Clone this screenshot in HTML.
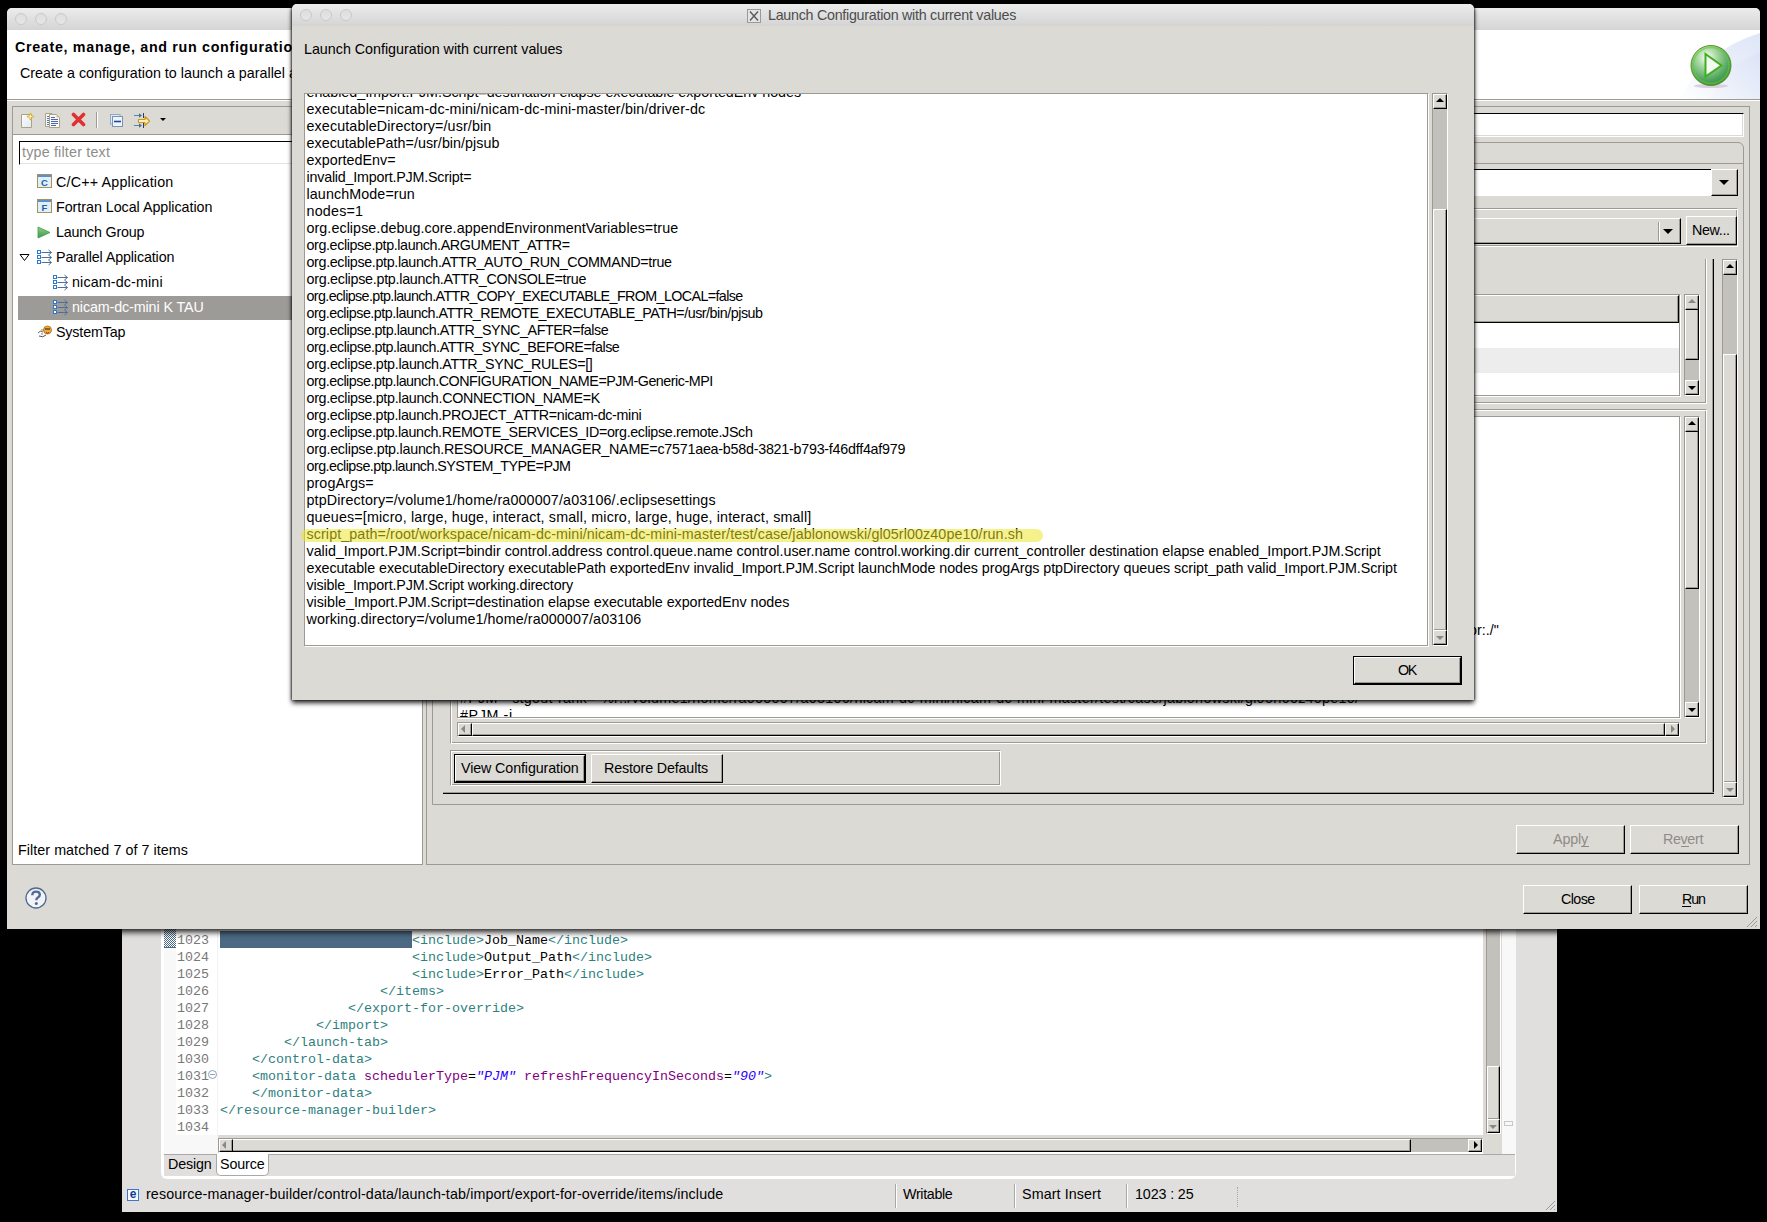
<!DOCTYPE html><html><head><meta charset="utf-8"><style>
html,body{margin:0;padding:0}
body{width:1767px;height:1222px;background:#000;position:relative;overflow:hidden;font-family:"Liberation Sans",sans-serif;font-size:14.3px;line-height:17px;color:#000}
.a{position:absolute;box-sizing:border-box}
.t{position:absolute;white-space:pre;line-height:17px;font-size:14.3px}
.m{position:absolute;white-space:pre;line-height:17px;font-family:"Liberation Mono",monospace;font-size:13.33px}
.tg{color:#2f7f7f}.an{color:#7f007f}.av{color:#2a00ff;font-style:italic}
</style></head><body>
<div class="a" style="left:122px;top:880px;width:1435px;height:332px;background:#e0dfde"></div><div class="a" style="left:161px;top:880px;width:1355px;height:299px;background:#fff;border-radius:0 0 6px 6px"></div><div class="a" style="left:164px;top:880px;width:12px;height:255px;background:#f8f8f8"></div><div class="a" style="left:164px;top:1135px;width:54px;height:20px;background:#f8f8f8"></div><div class="a" style="left:217px;top:880px;width:1px;height:255px;background:#f2f2f2"></div><div class="a" style="left:220px;top:931px;width:192px;height:17px;background:#4b6983"></div><div class="a" style="left:164px;top:929px;width:12px;height:19px;background-color:#fff;background-image:linear-gradient(45deg,#4b6983 25%,transparent 25%,transparent 75%,#4b6983 75%),linear-gradient(45deg,#4b6983 25%,transparent 25%,transparent 75%,#4b6983 75%);background-size:2px 2px;background-position:0 0,1px 1px;border-bottom:1px solid #4b6983"></div><div class="m" style="left:177px;top:932px;color:#787878">1023</div><div class="m" style="left:177px;top:949px;color:#787878">1024</div><div class="m" style="left:177px;top:966px;color:#787878">1025</div><div class="m" style="left:177px;top:983px;color:#787878">1026</div><div class="m" style="left:177px;top:1000px;color:#787878">1027</div><div class="m" style="left:177px;top:1017px;color:#787878">1028</div><div class="m" style="left:177px;top:1034px;color:#787878">1029</div><div class="m" style="left:177px;top:1051px;color:#787878">1030</div><div class="m" style="left:177px;top:1068px;color:#787878">1031</div><div class="m" style="left:177px;top:1085px;color:#787878">1032</div><div class="m" style="left:177px;top:1102px;color:#787878">1033</div><div class="m" style="left:177px;top:1119px;color:#787878">1034</div><div class="m" style="left:412px;top:932px;"><span class="tg">&lt;include&gt;</span>Job_Name<span class="tg">&lt;/include&gt;</span></div><div class="m" style="left:412px;top:949px;"><span class="tg">&lt;include&gt;</span>Output_Path<span class="tg">&lt;/include&gt;</span></div><div class="m" style="left:412px;top:966px;"><span class="tg">&lt;include&gt;</span>Error_Path<span class="tg">&lt;/include&gt;</span></div><div class="m" style="left:380px;top:983px;"><span class="tg">&lt;/items&gt;</span></div><div class="m" style="left:348px;top:1000px;"><span class="tg">&lt;/export-for-override&gt;</span></div><div class="m" style="left:316px;top:1017px;"><span class="tg">&lt;/import&gt;</span></div><div class="m" style="left:284px;top:1034px;"><span class="tg">&lt;/launch-tab&gt;</span></div><div class="m" style="left:252px;top:1051px;"><span class="tg">&lt;/control-data&gt;</span></div><div class="m" style="left:252px;top:1068px;"><span class="tg">&lt;monitor-data</span> <span class="an">schedulerType</span>=<span class="av">"PJM"</span> <span class="an">refreshFrequencyInSeconds</span>=<span class="av">"90"</span><span class="tg">&gt;</span></div><div class="m" style="left:252px;top:1085px;"><span class="tg">&lt;/monitor-data&gt;</span></div><div class="m" style="left:220px;top:1102px;"><span class="tg">&lt;/resource-manager-builder&gt;</span></div><div class="a" style="left:208px;top:1070px;width:9px;height:9px;border:1px solid #8fa0b8;border-radius:50%;background:#fff"></div><div class="a" style="left:210px;top:1074px;width:5px;height:1px;background:#8fa0b8"></div><div class="a" style="left:1483px;top:880px;width:19px;height:274px;background:#dcdad5"></div><div class="a" style="left:218px;top:1135px;width:1265px;height:4px;background:#dcdad5"></div><div class="a" style="left:1486px;top:880px;width:15px;height:254px;background:#c3c1bc;border-left:1px solid #9d9a94;border-top:1px solid #9d9a94;border-right:1px solid #fff;border-bottom:1px solid #fff"></div><div class="a" style="left:1487px;top:1066px;width:13px;height:54px;background:#dcdad5;border-top:1px solid #fff;border-left:1px solid #fff;border-right:1px solid #000;border-bottom:1px solid #000;box-shadow:inset -1px -1px 0 #9d9a94;"></div><div class="a" style="left:1487px;top:1119px;width:13px;height:14px;background:#dcdad5;border-top:1px solid #fff;border-left:1px solid #fff;border-right:1px solid #000;border-bottom:1px solid #000;box-shadow:inset -1px -1px 0 #9d9a94;"></div><div class="a" style="left:1489px;top:1125px;width:0;height:0;border-left:4px solid transparent;border-right:4px solid transparent;border-top:4px solid #8a8884"></div><div class="a" style="left:1502px;top:880px;width:14px;height:274px;background:#f8f8f8"></div><div class="a" style="left:1504px;top:1121px;width:9px;height:5px;border:1px solid #c8c8c8"></div><div class="a" style="left:218px;top:1138px;width:1265px;height:15px;background:#c3c1bc;border-left:1px solid #9d9a94;border-top:1px solid #9d9a94;border-right:1px solid #fff;border-bottom:1px solid #fff"></div><div class="a" style="left:232px;top:1139px;width:1179px;height:13px;background:#dcdad5;border-top:1px solid #fff;border-left:1px solid #fff;border-right:1px solid #000;border-bottom:1px solid #000;box-shadow:inset -1px -1px 0 #9d9a94;"></div><div class="a" style="left:219px;top:1139px;width:14px;height:13px;background:#dcdad5;border-top:1px solid #fff;border-left:1px solid #fff;border-right:1px solid #000;border-bottom:1px solid #000;box-shadow:inset -1px -1px 0 #9d9a94;"></div><div class="a" style="left:222px;top:1141px;width:0;height:0;border-top:4px solid transparent;border-bottom:4px solid transparent;border-right:4px solid #8a8884"></div><div class="a" style="left:1468px;top:1139px;width:14px;height:13px;background:#dcdad5;border-top:1px solid #fff;border-left:1px solid #fff;border-right:1px solid #000;border-bottom:1px solid #000;box-shadow:inset -1px -1px 0 #9d9a94;"></div><div class="a" style="left:1474px;top:1141px;width:0;height:0;border-top:4px solid transparent;border-bottom:4px solid transparent;border-left:4px solid #000"></div><div class="a" style="left:164px;top:1154px;width:1351px;height:22px;background:#e0dfde;border-top:1px solid #a9a9a9"></div><div class="a" style="left:216px;top:1154px;width:53px;height:22px;background:#fff;border:1px solid #a9a9a9;border-top:none;border-radius:0 0 5px 5px"></div><div class="t" style="left:168px;top:1156px;letter-spacing:-0.169px;">Design</div><div class="t" style="left:220px;top:1156px;letter-spacing:-0.135px;">Source</div><div class="a" style="left:127px;top:1189px;width:12px;height:12px;border:1px solid #3a78c8;background:#f4f8ff"></div><div class="a" style="left:128px;top:1187px;width:10px;text-align:center;font:bold 12px/15px 'Liberation Sans';color:#16399a">e</div><div class="t" style="left:146px;top:1186px;letter-spacing:0.112px;">resource-manager-builder/control-data/launch-tab/import/export-for-override/items/include</div><div class="a" style="left:895px;top:1184px;width:2px;height:24px;border-left:1px solid #a9a9a9;border-right:1px solid #fff"></div><div class="a" style="left:1014px;top:1184px;width:2px;height:24px;border-left:1px solid #a9a9a9;border-right:1px solid #fff"></div><div class="a" style="left:1126px;top:1184px;width:2px;height:24px;border-left:1px solid #a9a9a9;border-right:1px solid #fff"></div><div class="t" style="left:903px;top:1186px;letter-spacing:-0.336px;">Writable</div><div class="t" style="left:1022px;top:1186px;letter-spacing:0.095px;">Smart Insert</div><div class="t" style="left:1135px;top:1186px;letter-spacing:-0.125px;">1023 : 25</div><div class="a" style="left:1237px;top:1187px;width:1px;height:20px;border-left:1px dotted #a9a9a9"></div><svg class="a" style="left:1543px;top:1198px" width="13" height="13"><path d="M12 3L3 12M12 7L7 12M12 11L11 12" stroke="#9a9a9a" stroke-width="1"/></svg><div class="a" style="left:7px;top:8px;width:1753px;height:921px;background:#dcdad5;border-radius:5px 5px 0 0;box-shadow:0 3px 6px rgba(0,0,0,.9)"></div><div class="a" style="left:7px;top:8px;width:1753px;height:22px;background:linear-gradient(#ececec,#d4d4d4);border-radius:5px 5px 0 0"></div><div class="a" style="left:15px;top:13px;width:12px;height:12px;border-radius:50%;border:1px solid #c9c9c9;background:linear-gradient(#dedede,#e6e6e6)"></div><div class="a" style="left:35px;top:13px;width:12px;height:12px;border-radius:50%;border:1px solid #c9c9c9;background:linear-gradient(#dedede,#e6e6e6)"></div><div class="a" style="left:55px;top:13px;width:12px;height:12px;border-radius:50%;border:1px solid #c9c9c9;background:linear-gradient(#dedede,#e6e6e6)"></div><div class="a" style="left:7px;top:30px;width:1753px;height:69px;background:#fff"></div><svg class="a" style="left:1680px;top:30px" width="80" height="69"><defs><linearGradient id="sw" x1="0" y1="1" x2="1" y2="0"><stop offset="0" stop-color="#ffffff"/><stop offset=".5" stop-color="#eaeffa"/><stop offset="1" stop-color="#dfe6f7"/></linearGradient><linearGradient id="sw2" x1="0" y1="1" x2="1" y2="0"><stop offset="0" stop-color="#f4f6fc"/><stop offset="1" stop-color="#d9e2f6"/></linearGradient></defs><path d="M0 69 Q25 20 80 3 L80 69 Z" fill="url(#sw)"/><path d="M30 69 Q45 35 80 22 L80 69 Z" fill="url(#sw2)" opacity=".7"/></svg><div class="a" style="left:7px;top:99px;width:1753px;height:1px;background:#9d9a94"></div><div class="a" style="left:7px;top:100px;width:1753px;height:1px;background:#fff"></div><div class="t" style="left:15px;top:39px;letter-spacing:0.677px;font-weight:bold">Create, manage, and run configurations</div><div class="t" style="left:20px;top:65px;letter-spacing:0.008px;">Create a configuration to launch a parallel application</div><svg class="a" style="left:1689px;top:44px" width="44" height="46"><defs><radialGradient id="pg" cx="40%" cy="30%" r="70%"><stop offset="0" stop-color="#ffffff"/><stop offset=".35" stop-color="#a8d8a0"/><stop offset=".8" stop-color="#4fa55e"/><stop offset="1" stop-color="#3c8f45"/></radialGradient></defs><ellipse cx="22" cy="42" rx="17" ry="2" fill="#d8d0e0"/><circle cx="22" cy="21.5" r="20" fill="url(#pg)" stroke="#5f8f2a" stroke-width="1"/><circle cx="22" cy="21.5" r="18" fill="none" stroke="#66cc33" stroke-width="1.5" opacity=".6"/><path d="M16.5 10 L32.5 21.5 L16.5 32.5 Z" fill="#f4fbf2" stroke="#3fae1f" stroke-width="2"/></svg><div class="a" style="left:12px;top:106px;width:411px;height:759px;background:#fff;border:1px solid #9d9a94"></div><div class="a" style="left:13px;top:107px;width:409px;height:28px;background:#dcdad5;border-bottom:1px solid #9d9a94"></div><svg class="a" style="left:20px;top:112px" width="16" height="17"><defs><linearGradient id="ndg" x1="0" y1="0" x2="1" y2="1"><stop offset="0" stop-color="#fbfcff"/><stop offset="1" stop-color="#dfe8f8"/></linearGradient></defs><path d="M1.5 2.5H11.5V15.5H1.5Z" fill="url(#ndg)" stroke="#aca27c"/><path d="M10.5 1.8v5.4M7.8 4.5h5.4" stroke="#d8b438" stroke-width="2" stroke-linecap="round"/><path d="M10.5 2.5v4M8.5 4.5h4" stroke="#fff6c8" stroke-width="0.8"/></svg><svg class="a" style="left:44px;top:112px" width="17" height="17"><path d="M1.5 1.5H8L9.5 3V14.5H1.5Z" fill="#f4f7fc" stroke="#aca27c"/><path d="M3 4.5h2M3 6.5h2M3 8.5h2M3 10.5h2M3 12.5h2" stroke="#5a74b0"/><path d="M5.5 2.5H12.5L15.5 5.5V15.5H5.5Z" fill="#f6f8fd" stroke="#aca27c"/><path d="M12.5 2.5V5.5H15.5Z" fill="#dcc27a"/><path d="M7 5.5h4M7 7.5h7M7 9.5h7M7 11.5h7M7 13.5h5" stroke="#4a66a8"/></svg><svg class="a" style="left:71px;top:112px" width="15" height="15"><path d="M2.5 2.5L12.5 12.5M12.5 2.5L2.5 12.5" stroke="#e03030" stroke-width="3.6" stroke-linecap="round"/></svg><div class="a" style="left:96px;top:112px;width:2px;height:16px;border-left:1px solid #9d9a94;border-right:1px solid #fff"></div><svg class="a" style="left:109px;top:113px" width="15" height="15"><rect x="1.5" y="1.5" width="9.5" height="9.5" fill="#d8efff" stroke="#98a6c0"/><rect x="3.5" y="3.5" width="10" height="10" fill="#eaf6ff" stroke="#8290b0"/><path d="M5 8.5h7" stroke="#204890" stroke-width="1.6"/></svg><svg class="a" style="left:133px;top:112px" width="18" height="17"><path d="M1 3.5h6M1 13.5h6" stroke="#4a8ab8" stroke-width="1"/><path d="M6 1.2L9 3.5 6 5.8ZM6 11.2L9 13.5 6 15.8Z" fill="#44708c"/><path d="M10.5 1v5M10.5 11v5" stroke="#2a3a6a" stroke-width="1"/><path d="M5.5 7.5H12V4.5L16.5 9 12 13.5V10.5H5.5Z" fill="#fff4bf" stroke="#d49614" stroke-width="1.2" stroke-linejoin="round"/></svg><div class="a" style="left:160px;top:118px;width:0;height:0;border-left:3px solid transparent;border-right:3px solid transparent;border-top:3px solid #000"></div><div class="a" style="left:19px;top:141px;width:398px;height:24px;background:#fff;border-top:1px solid #000;border-left:1px solid #000;border-bottom:1px solid #fff;border-right:1px solid #fff;box-shadow:inset -1px -1px 0 #e6e4df"></div><div class="t" style="left:22px;top:144px;letter-spacing:0.192px;color:#8e8c88">type filter text</div><div class="a" style="left:18px;top:296px;width:404px;height:24px;background:#9d9b97"></div><svg class="a" style="left:37px;top:174px" width="16" height="15"><rect x="0.5" y="0.5" width="14" height="13" fill="#def0fb" stroke="#a8925c"/><rect x="1" y="1" width="13" height="2" fill="#5b8fd0"/><text x="7.5" y="11.6" font-family="Liberation Sans" font-weight="bold" font-size="9.5" text-anchor="middle" fill="#2c5aa0">C</text></svg><div class="t" style="left:56px;top:174px;letter-spacing:0.179px;color:#000">C/C++ Application</div><svg class="a" style="left:37px;top:199px" width="16" height="15"><rect x="0.5" y="0.5" width="14" height="13" fill="#def0fb" stroke="#a8925c"/><rect x="1" y="1" width="13" height="2" fill="#5b8fd0"/><text x="7.5" y="11.6" font-family="Liberation Sans" font-weight="bold" font-size="9.5" text-anchor="middle" fill="#2c5aa0">F</text></svg><div class="t" style="left:56px;top:199px;letter-spacing:-0.038px;color:#000">Fortran Local Application</div><svg class="a" style="left:37px;top:226px" width="15" height="13"><defs><linearGradient id="lgg" x1="0" y1="0" x2="0" y2="1"><stop offset="0" stop-color="#8fd08a"/><stop offset="1" stop-color="#3a9a48"/></linearGradient></defs><path d="M1 1L13 6.5 1 12z" fill="url(#lgg)" stroke="#3f9a4a" stroke-width=".8" stroke-linejoin="round"/></svg><div class="t" style="left:56px;top:224px;letter-spacing:-0.194px;color:#000">Launch Group</div><svg class="a" style="left:37px;top:249px" width="16" height="17"><rect x="0.5" y="1.5" width="3" height="3" fill="#fff" stroke="#2a78d0"/><rect x="0.5" y="6.5" width="3" height="3" fill="#fff" stroke="#2a78d0"/><rect x="0.5" y="11.5" width="3" height="3" fill="#fff" stroke="#2a78d0"/><path d="M4.5 3.5h10M4.5 8.5h10M4.5 13.5h10" stroke="#4f6f9a" fill="none"/><path d="M11.5 1L14.5 3.5 11.5 6 14.5 8.5 11.5 11 14.5 13.5 11.5 16" stroke="#4f6f9a" fill="none"/></svg><div class="t" style="left:56px;top:249px;letter-spacing:-0.126px;color:#000">Parallel Application</div><svg class="a" style="left:53px;top:274px" width="16" height="17"><rect x="0.5" y="1.5" width="3" height="3" fill="#fff" stroke="#2a78d0"/><rect x="0.5" y="6.5" width="3" height="3" fill="#fff" stroke="#2a78d0"/><rect x="0.5" y="11.5" width="3" height="3" fill="#fff" stroke="#2a78d0"/><path d="M4.5 3.5h10M4.5 8.5h10M4.5 13.5h10" stroke="#4f6f9a" fill="none"/><path d="M11.5 1L14.5 3.5 11.5 6 14.5 8.5 11.5 11 14.5 13.5 11.5 16" stroke="#4f6f9a" fill="none"/></svg><div class="t" style="left:72px;top:274px;letter-spacing:0.132px;color:#000">nicam-dc-mini</div><svg class="a" style="left:53px;top:299px" width="16" height="17"><rect x="0.5" y="1.5" width="3" height="3" fill="#fff" stroke="#2a78d0"/><rect x="0.5" y="6.5" width="3" height="3" fill="#fff" stroke="#2a78d0"/><rect x="0.5" y="11.5" width="3" height="3" fill="#fff" stroke="#2a78d0"/><path d="M4.5 3.5h10M4.5 8.5h10M4.5 13.5h10" stroke="#4f6f9a" fill="none"/><path d="M11.5 1L14.5 3.5 11.5 6 14.5 8.5 11.5 11 14.5 13.5 11.5 16" stroke="#4f6f9a" fill="none"/></svg><div class="t" style="left:72px;top:299px;letter-spacing:-0.112px;color:#fff">nicam-dc-mini K TAU</div><svg class="a" style="left:37px;top:325px" width="16" height="13"><path d="M1 8 Q3 5 6 7" stroke="#666" fill="none"/><path d="M2 11 Q6 13 9 10" stroke="#555" fill="none"/><path d="M4 5h3M4 9h2" stroke="#888"/><circle cx="10.5" cy="5" r="4" fill="#f2a93a" stroke="#b06a10" stroke-width=".8"/><path d="M8 4h5" stroke="#333" stroke-width="1.2"/><path d="M9 7.5 Q10.5 9 12 7.5" stroke="#a03000" fill="none"/></svg><div class="t" style="left:56px;top:324px;letter-spacing:-0.169px;color:#000">SystemTap</div><svg class="a" style="left:19px;top:253px" width="11" height="9"><path d="M1 1.5h9l-4.5 6z" fill="none" stroke="#000" stroke-width="1"/></svg><div class="t" style="left:18px;top:842px;letter-spacing:0.057px;">Filter matched 7 of 7 items</div><div class="a" style="left:426px;top:106px;width:1324px;height:759px;border:1px solid #9d9a94"></div><div class="a" style="left:480px;top:113px;width:1264px;height:24px;background:#fff;border-top:1px solid #000;border-left:1px solid #000;border-bottom:1px solid #fff;border-right:1px solid #fff;box-shadow:inset -1px -1px 0 #dcdad5"></div><div class="a" style="left:432px;top:142px;width:1312px;height:663px;border:1px solid #9d9a94;border-radius:0 6px 0 0"></div><div class="a" style="left:433px;top:163px;width:1310px;height:1px;background:#9d9a94"></div><div class="a" style="left:440px;top:169px;width:1272px;height:27px;background:#fff;border-top:1px solid #000;border-left:1px solid #000;border-bottom:1px solid #fff;border-right:1px solid #fff"></div><div class="a" style="left:1711px;top:169px;width:27px;height:27px;background:#dcdad5;border-top:1px solid #fff;border-left:1px solid #fff;border-right:1px solid #000;border-bottom:1px solid #000;box-shadow:inset -1px -1px 0 #9d9a94;"></div><div class="a" style="left:1719px;top:180px;width:0;height:0;border-left:5px solid transparent;border-right:5px solid transparent;border-top:5px solid #000"></div><div class="a" style="left:440px;top:208px;width:1298px;height:39px;border-top:1px solid #9d9a94;border-left:1px solid #9d9a94;border-right:1px solid #fff;border-bottom:1px solid #fff;box-shadow:inset 1px 1px 0 #fff,inset -1px -1px 0 #9d9a94"></div><div class="a" style="left:446px;top:218px;width:1235px;height:26px;background:#dcdad5;border-top:1px solid #fff;border-left:1px solid #fff;border-right:1px solid #000;border-bottom:1px solid #000;box-shadow:inset -1px -1px 0 #9d9a94;"></div><div class="a" style="left:1658px;top:222px;width:2px;height:19px;border-left:1px solid #9d9a94;border-right:1px solid #fff"></div><div class="a" style="left:1663px;top:229px;width:0;height:0;border-left:5px solid transparent;border-right:5px solid transparent;border-top:5px solid #000"></div><div class="a" style="left:1686px;top:216px;width:51px;height:29px;background:#dcdad5;border-top:1px solid #fff;border-left:1px solid #fff;border-right:1px solid #000;border-bottom:1px solid #000;box-shadow:inset -1px -1px 0 #9d9a94;"></div><div class="t" style="left:1692px;top:222px;letter-spacing:-0.339px;color:#000;">New...</div><div class="a" style="left:1712px;top:259px;width:1px;height:534px;background:#9d9a94"></div><div class="a" style="left:1713px;top:259px;width:1px;height:535px;background:#000"></div><div class="a" style="left:443px;top:792px;width:1271px;height:1px;background:#9d9a94"></div><div class="a" style="left:443px;top:793px;width:1271px;height:1px;background:#000"></div><div class="a" style="left:1722px;top:259px;width:16px;height:539px;background:#c3c1bc;border-left:1px solid #9d9a94;border-top:1px solid #9d9a94;border-right:1px solid #fff;border-bottom:1px solid #fff"></div><div class="a" style="left:1723px;top:354px;width:14px;height:429px;background:#dcdad5;border-top:1px solid #fff;border-left:1px solid #fff;border-right:1px solid #000;border-bottom:1px solid #000;box-shadow:inset -1px -1px 0 #9d9a94;"></div><div class="a" style="left:1723px;top:260px;width:14px;height:15px;background:#dcdad5;border-top:1px solid #fff;border-left:1px solid #fff;border-right:1px solid #000;border-bottom:1px solid #000;box-shadow:inset -1px -1px 0 #9d9a94;"></div><div class="a" style="left:1726px;top:264px;width:0;height:0;border-left:4px solid transparent;border-right:4px solid transparent;border-bottom:4px solid #000"></div><div class="a" style="left:1723px;top:782px;width:14px;height:15px;background:#dcdad5;border-top:1px solid #fff;border-left:1px solid #fff;border-right:1px solid #000;border-bottom:1px solid #000;box-shadow:inset -1px -1px 0 #9d9a94;"></div><div class="a" style="left:1726px;top:788px;width:0;height:0;border-left:4px solid transparent;border-right:4px solid transparent;border-top:4px solid #8a8884"></div><div class="a" style="left:450px;top:259px;width:1257px;height:145px;border-left:1px solid #9d9a94;border-right:1px solid #fff;border-bottom:1px solid #fff;box-shadow:inset 1px 0 0 #fff,inset -1px -1px 0 #9d9a94"></div><div class="a" style="left:457px;top:294px;width:1223px;height:102px;background:#fff;border:1px solid #9d9a94;box-shadow:1px 1px 0 #fff"></div><div class="a" style="left:458px;top:295px;width:1221px;height:28px;background:#dcdad5;border-top:1px solid #fff;border-left:1px solid #fff;border-right:1px solid #000;border-bottom:1px solid #000;box-shadow:inset -1px -1px 0 #9d9a94;"></div><div class="a" style="left:458px;top:348px;width:1221px;height:25px;background:#ededed"></div><div class="a" style="left:1684px;top:294px;width:16px;height:102px;background:#c3c1bc;border-left:1px solid #9d9a94;border-top:1px solid #9d9a94;border-right:1px solid #fff;border-bottom:1px solid #fff"></div><div class="a" style="left:1685px;top:308px;width:14px;height:52px;background:#dcdad5;border-top:1px solid #fff;border-left:1px solid #fff;border-right:1px solid #000;border-bottom:1px solid #000;box-shadow:inset -1px -1px 0 #9d9a94;"></div><div class="a" style="left:1685px;top:295px;width:14px;height:15px;background:#dcdad5;border-top:1px solid #fff;border-left:1px solid #fff;border-right:1px solid #000;border-bottom:1px solid #000;box-shadow:inset -1px -1px 0 #9d9a94;"></div><div class="a" style="left:1688px;top:299px;width:0;height:0;border-left:4px solid transparent;border-right:4px solid transparent;border-bottom:4px solid #8a8884"></div><div class="a" style="left:1685px;top:380px;width:14px;height:15px;background:#dcdad5;border-top:1px solid #fff;border-left:1px solid #fff;border-right:1px solid #000;border-bottom:1px solid #000;box-shadow:inset -1px -1px 0 #9d9a94;"></div><div class="a" style="left:1688px;top:386px;width:0;height:0;border-left:4px solid transparent;border-right:4px solid transparent;border-top:4px solid #000"></div><div class="a" style="left:450px;top:409px;width:1257px;height:335px;border-top:1px solid #9d9a94;border-left:1px solid #9d9a94;border-right:1px solid #fff;border-bottom:1px solid #fff;box-shadow:inset 1px 1px 0 #fff,inset -1px -1px 0 #9d9a94"></div><div class="a" style="left:457px;top:416px;width:1223px;height:302px;background:#fff;border:1px solid #9d9a94;box-shadow:1px 1px 0 #fff;overflow:hidden"><div class="t" style="left:2px;top:273px;letter-spacing:.3px">#PJM --stgout-rank="%r:./volume1/home/ra000007/a03106/nicam-dc-mini/nicam-dc-mini-master/test/case/jablonowski/gl05rl00z40pe10/"</div><div class="t" style="left:2px;top:290px;letter-spacing:.6px">#PJM -j</div><div class="t" style="left:1011px;top:205px">or:./"</div></div><div class="a" style="left:1684px;top:416px;width:16px;height:302px;background:#c3c1bc;border-left:1px solid #9d9a94;border-top:1px solid #9d9a94;border-right:1px solid #fff;border-bottom:1px solid #fff"></div><div class="a" style="left:1685px;top:430px;width:14px;height:159px;background:#dcdad5;border-top:1px solid #fff;border-left:1px solid #fff;border-right:1px solid #000;border-bottom:1px solid #000;box-shadow:inset -1px -1px 0 #9d9a94;"></div><div class="a" style="left:1685px;top:417px;width:14px;height:15px;background:#dcdad5;border-top:1px solid #fff;border-left:1px solid #fff;border-right:1px solid #000;border-bottom:1px solid #000;box-shadow:inset -1px -1px 0 #9d9a94;"></div><div class="a" style="left:1688px;top:421px;width:0;height:0;border-left:4px solid transparent;border-right:4px solid transparent;border-bottom:4px solid #000"></div><div class="a" style="left:1685px;top:702px;width:14px;height:15px;background:#dcdad5;border-top:1px solid #fff;border-left:1px solid #fff;border-right:1px solid #000;border-bottom:1px solid #000;box-shadow:inset -1px -1px 0 #9d9a94;"></div><div class="a" style="left:1688px;top:708px;width:0;height:0;border-left:4px solid transparent;border-right:4px solid transparent;border-top:4px solid #000"></div><div class="a" style="left:457px;top:722px;width:1223px;height:15px;background:#c3c1bc;border-left:1px solid #9d9a94;border-top:1px solid #9d9a94;border-right:1px solid #fff;border-bottom:1px solid #fff"></div><div class="a" style="left:472px;top:723px;width:1193px;height:13px;background:#dcdad5;border-top:1px solid #fff;border-left:1px solid #fff;border-right:1px solid #000;border-bottom:1px solid #000;box-shadow:inset -1px -1px 0 #9d9a94;"></div><div class="a" style="left:458px;top:723px;width:14px;height:13px;background:#dcdad5;border-top:1px solid #fff;border-left:1px solid #fff;border-right:1px solid #000;border-bottom:1px solid #000;box-shadow:inset -1px -1px 0 #9d9a94;"></div><div class="a" style="left:461px;top:725px;width:0;height:0;border-top:4px solid transparent;border-bottom:4px solid transparent;border-right:4px solid #8a8884"></div><div class="a" style="left:1665px;top:723px;width:14px;height:13px;background:#dcdad5;border-top:1px solid #fff;border-left:1px solid #fff;border-right:1px solid #000;border-bottom:1px solid #000;box-shadow:inset -1px -1px 0 #9d9a94;"></div><div class="a" style="left:1671px;top:725px;width:0;height:0;border-top:4px solid transparent;border-bottom:4px solid transparent;border-left:4px solid #8a8884"></div><div class="a" style="left:450px;top:750px;width:551px;height:36px;border-top:1px solid #9d9a94;border-left:1px solid #9d9a94;border-right:1px solid #fff;border-bottom:1px solid #fff;box-shadow:inset 1px 1px 0 #fff,inset -1px -1px 0 #9d9a94"></div><div class="a" style="left:454px;top:754px;width:132px;height:29px;background:#000"></div><div class="a" style="left:455px;top:755px;width:130px;height:27px;background:#dcdad5;border-top:1px solid #fff;border-left:1px solid #fff;border-right:1px solid #000;border-bottom:1px solid #000;box-shadow:inset -1px -1px 0 #9d9a94;"></div><div class="t" style="left:461px;top:760px;letter-spacing:-0.119px;color:#000;">View Configuration</div><div class="a" style="left:591px;top:754px;width:132px;height:29px;background:#dcdad5;border-top:1px solid #fff;border-left:1px solid #fff;border-right:1px solid #000;border-bottom:1px solid #000;box-shadow:inset -1px -1px 0 #9d9a94;"></div><div class="t" style="left:604px;top:760px;letter-spacing:-0.155px;color:#000;">Restore Defaults</div><div class="a" style="left:1516px;top:825px;width:109px;height:29px;background:#dcdad5;border-top:1px solid #fff;border-left:1px solid #fff;border-right:1px solid #000;border-bottom:1px solid #000;box-shadow:inset -1px -1px 0 #9d9a94;"></div><div class="t" style="left:1553px;top:831px;letter-spacing:-0.153px;color:#8e8c88;">Apply</div><div class="a" style="left:1581px;top:846px;width:8px;height:1px;background:#8e8c88"></div><div class="a" style="left:1630px;top:825px;width:109px;height:29px;background:#dcdad5;border-top:1px solid #fff;border-left:1px solid #fff;border-right:1px solid #000;border-bottom:1px solid #000;box-shadow:inset -1px -1px 0 #9d9a94;"></div><div class="t" style="left:1663px;top:831px;letter-spacing:-0.352px;color:#8e8c88;">Revert</div><div class="a" style="left:1681px;top:846px;width:8px;height:1px;background:#8e8c88"></div><svg class="a" style="left:24px;top:886px" width="24" height="24"><circle cx="12" cy="12" r="10" fill="#f2f3f6" stroke="#4f6a94" stroke-width="1.3"/><path d="M8.3 9.2 Q8.3 5.6 12.1 5.6 Q15.8 5.6 15.8 8.8 Q15.8 10.6 13.6 11.8 Q12.3 12.5 12.3 14.2" fill="none" stroke="#4f6a94" stroke-width="2.4"/><circle cx="12.3" cy="17.6" r="1.5" fill="#4f6a94"/></svg><div class="a" style="left:1523px;top:885px;width:109px;height:29px;background:#dcdad5;border-top:1px solid #fff;border-left:1px solid #fff;border-right:1px solid #000;border-bottom:1px solid #000;box-shadow:inset -1px -1px 0 #9d9a94;"></div><div class="t" style="left:1561px;top:891px;letter-spacing:-0.593px;color:#000;">Close</div><div class="a" style="left:1639px;top:885px;width:109px;height:29px;background:#dcdad5;border-top:1px solid #fff;border-left:1px solid #fff;border-right:1px solid #000;border-bottom:1px solid #000;box-shadow:inset -1px -1px 0 #9d9a94;"></div><div class="t" style="left:1682px;top:891px;letter-spacing:-1.145px;color:#000;">Run</div><div class="a" style="left:1682px;top:906px;width:9px;height:1px;background:#000"></div><svg class="a" style="left:1745px;top:915px" width="13" height="13"><path d="M12 2L2 12M12 6L6 12M12 10L10 12" stroke="#9a9a9a" stroke-width="1"/></svg><div class="a" style="left:292px;top:4px;width:1182px;height:696px;background:#dcdad5;border-radius:5px 5px 0 0;box-shadow:0 3px 5px rgba(0,0,0,.85),1px 0 2px rgba(0,0,0,.5),-1px 0 2px rgba(0,0,0,.5)"></div><div class="a" style="left:292px;top:4px;width:1182px;height:22px;background:linear-gradient(#ececec,#d4d4d4);border-radius:5px 5px 0 0"></div><div class="a" style="left:300px;top:9px;width:12px;height:12px;border-radius:50%;border:1px solid #c9c9c9;background:linear-gradient(#dedede,#e6e6e6)"></div><div class="a" style="left:320px;top:9px;width:12px;height:12px;border-radius:50%;border:1px solid #c9c9c9;background:linear-gradient(#dedede,#e6e6e6)"></div><div class="a" style="left:340px;top:9px;width:12px;height:12px;border-radius:50%;border:1px solid #c9c9c9;background:linear-gradient(#dedede,#e6e6e6)"></div><svg class="a" style="left:747px;top:9px" width="14" height="14"><rect x="0.5" y="0.5" width="13" height="13" fill="#e4e4e4" stroke="#9a9a9a"/><path d="M3 2.5L11 11.5M11 2.5L3 11.5" stroke="#555" stroke-width="1.3"/></svg><div class="t" style="left:768px;top:7px;letter-spacing:-0.277px;color:#4d4d4d">Launch Configuration with current values</div><div class="t" style="left:304px;top:41px;letter-spacing:-0.015px;">Launch Configuration with current values</div><div class="a" style="left:304px;top:93px;width:1124px;height:553px;background:#fff;border:1px solid #9d9a94;box-shadow:1px 1px 0 #fff;overflow:hidden"><div class="a" style="left:0;top:0;width:1122px;height:551px"><div class="t" style="left:1.5px;top:-10px;letter-spacing:-0.024px">enabled_Import.PJM.Script=destination elapse executable exportedEnv nodes</div><div class="t" style="left:1.5px;top:7px;letter-spacing:0.142px">executable=nicam-dc-mini/nicam-dc-mini-master/bin/driver-dc</div><div class="t" style="left:1.5px;top:24px;letter-spacing:0.115px">executableDirectory=/usr/bin</div><div class="t" style="left:1.5px;top:41px;letter-spacing:0.033px">executablePath=/usr/bin/pjsub</div><div class="t" style="left:1.5px;top:58px;letter-spacing:0.048px">exportedEnv=</div><div class="t" style="left:1.5px;top:75px;letter-spacing:-0.213px">invalid_Import.PJM.Script=</div><div class="t" style="left:1.5px;top:92px;letter-spacing:0.100px">launchMode=run</div><div class="t" style="left:1.5px;top:109px;letter-spacing:0.219px">nodes=1</div><div class="t" style="left:1.5px;top:126px;letter-spacing:0.066px">org.eclipse.debug.core.appendEnvironmentVariables=true</div><div class="t" style="left:1.5px;top:143px;letter-spacing:-0.385px">org.eclipse.ptp.launch.ARGUMENT_ATTR=</div><div class="t" style="left:1.5px;top:160px;letter-spacing:-0.346px">org.eclipse.ptp.launch.ATTR_AUTO_RUN_COMMAND=true</div><div class="t" style="left:1.5px;top:177px;letter-spacing:-0.262px">org.eclipse.ptp.launch.ATTR_CONSOLE=true</div><div class="t" style="left:1.5px;top:194px;letter-spacing:-0.609px">org.eclipse.ptp.launch.ATTR_COPY_EXECUTABLE_FROM_LOCAL=false</div><div class="t" style="left:1.5px;top:211px;letter-spacing:-0.480px">org.eclipse.ptp.launch.ATTR_REMOTE_EXECUTABLE_PATH=/usr/bin/pjsub</div><div class="t" style="left:1.5px;top:228px;letter-spacing:-0.422px">org.eclipse.ptp.launch.ATTR_SYNC_AFTER=false</div><div class="t" style="left:1.5px;top:245px;letter-spacing:-0.431px">org.eclipse.ptp.launch.ATTR_SYNC_BEFORE=false</div><div class="t" style="left:1.5px;top:262px;letter-spacing:-0.315px">org.eclipse.ptp.launch.ATTR_SYNC_RULES=[]</div><div class="t" style="left:1.5px;top:279px;letter-spacing:-0.471px">org.eclipse.ptp.launch.CONFIGURATION_NAME=PJM-Generic-MPI</div><div class="t" style="left:1.5px;top:296px;letter-spacing:-0.323px">org.eclipse.ptp.launch.CONNECTION_NAME=K</div><div class="t" style="left:1.5px;top:313px;letter-spacing:-0.335px">org.eclipse.ptp.launch.PROJECT_ATTR=nicam-dc-mini</div><div class="t" style="left:1.5px;top:330px;letter-spacing:-0.341px">org.eclipse.ptp.launch.REMOTE_SERVICES_ID=org.eclipse.remote.JSch</div><div class="t" style="left:1.5px;top:347px;letter-spacing:-0.244px">org.eclipse.ptp.launch.RESOURCE_MANAGER_NAME=c7571aea-b58d-3821-b793-f46dff4af979</div><div class="t" style="left:1.5px;top:364px;letter-spacing:-0.531px">org.eclipse.ptp.launch.SYSTEM_TYPE=PJM</div><div class="t" style="left:1.5px;top:381px;letter-spacing:0.081px">progArgs=</div><div class="t" style="left:1.5px;top:398px;letter-spacing:0.140px">ptpDirectory=/volume1/home/ra000007/a03106/.eclipsesettings</div><div class="t" style="left:1.5px;top:415px;letter-spacing:0.156px">queues=[micro, large, huge, interact, small, micro, large, huge, interact, small]</div><div class="t" style="left:1.5px;top:432px;letter-spacing:0.098px">script_path=/root/workspace/nicam-dc-mini/nicam-dc-mini-master/test/case/jablonowski/gl05rl00z40pe10/run.sh</div><div class="t" style="left:1.5px;top:449px;letter-spacing:-0.003px">valid_Import.PJM.Script=bindir control.address control.queue.name control.user.name control.working.dir current_controller destination elapse enabled_Import.PJM.Script</div><div class="t" style="left:1.5px;top:466px;letter-spacing:-0.057px">executable executableDirectory executablePath exportedEnv invalid_Import.PJM.Script launchMode nodes progArgs ptpDirectory queues script_path valid_Import.PJM.Script</div><div class="t" style="left:1.5px;top:483px;letter-spacing:-0.158px">visible_Import.PJM.Script working.directory</div><div class="t" style="left:1.5px;top:500px;letter-spacing:-0.033px">visible_Import.PJM.Script=destination elapse executable exportedEnv nodes</div><div class="t" style="left:1.5px;top:517px;letter-spacing:0.099px">working.directory=/volume1/home/ra000007/a03106</div></div></div><div class="a" style="left:301px;top:529px;width:742px;height:13px;background:rgba(236,228,36,.52);border-radius:6.5px"></div><div class="a" style="left:1432px;top:93px;width:16px;height:553px;background:#c3c1bc;border-left:1px solid #9d9a94;border-top:1px solid #9d9a94;border-right:1px solid #fff;border-bottom:1px solid #fff"></div><div class="a" style="left:1433px;top:209px;width:14px;height:422px;background:#dcdad5;border-top:1px solid #fff;border-left:1px solid #fff;border-right:1px solid #000;border-bottom:1px solid #000;box-shadow:inset -1px -1px 0 #9d9a94;"></div><div class="a" style="left:1433px;top:94px;width:14px;height:15px;background:#dcdad5;border-top:1px solid #fff;border-left:1px solid #fff;border-right:1px solid #000;border-bottom:1px solid #000;box-shadow:inset -1px -1px 0 #9d9a94;"></div><div class="a" style="left:1436px;top:98px;width:0;height:0;border-left:4px solid transparent;border-right:4px solid transparent;border-bottom:4px solid #000"></div><div class="a" style="left:1433px;top:630px;width:14px;height:15px;background:#dcdad5;border-top:1px solid #fff;border-left:1px solid #fff;border-right:1px solid #000;border-bottom:1px solid #000;box-shadow:inset -1px -1px 0 #9d9a94;"></div><div class="a" style="left:1436px;top:636px;width:0;height:0;border-left:4px solid transparent;border-right:4px solid transparent;border-top:4px solid #8a8884"></div><div class="a" style="left:1353px;top:656px;width:109px;height:29px;background:#000"></div><div class="a" style="left:1354px;top:657px;width:107px;height:27px;background:#dcdad5;border-top:1px solid #fff;border-left:1px solid #fff;border-right:1px solid #000;border-bottom:1px solid #000;box-shadow:inset -1px -1px 0 #9d9a94;"></div><div class="t" style="left:1398px;top:662px;letter-spacing:-1.336px;color:#000;">OK</div></body></html>
